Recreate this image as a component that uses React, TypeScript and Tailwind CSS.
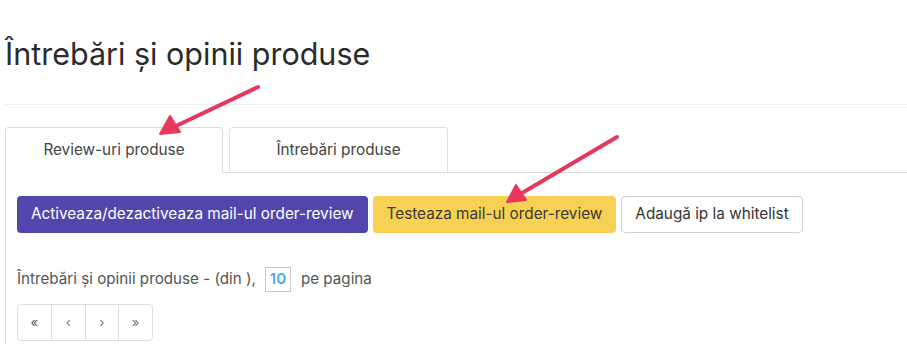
import React from 'react';

const tabs = [
  { key: 'reviews', label: 'Review-uri produse', active: true },
  { key: 'questions', label: 'Întrebări produse', active: false },
];

const pager = ['«', '‹', '›', '»'];

function Arrows() {
  return (
    <svg className="pointer-events-none absolute left-0 top-0" width="907" height="344" viewBox="0 0 907 344">
      <g stroke="#e8375c" strokeWidth="4" strokeLinecap="round" fill="#e8375c">
        <line x1="258" y1="87" x2="176" y2="126" />
        <polygon points="160,134 170,116 180,132" strokeWidth="2" strokeLinejoin="round" />
        <line x1="617" y1="137" x2="522" y2="193" />
        <polygon points="507,202 516,185 526,200" strokeWidth="2" strokeLinejoin="round" />
      </g>
    </svg>
  );
}

export default function App() {
  return (
    <div
      className="relative h-[344px] w-[907px] overflow-hidden bg-white pl-[5px] text-[#333]"
      style={{ fontFamily: 'Inter, "Noto Sans", sans-serif' }}
    >
      <h1 className="pt-[33px] text-[30.5px] leading-[42px] font-normal text-[#2b2b2b]">Întrebări și opinii produse</h1>
      <div className="mt-[29px] border-t border-[#eceef1]" />

      {/* Tabs */}
      <div className="mt-[22px] flex gap-[6px] border-b border-[#dcdcdc]">
        {tabs.map((tab) => (
          <div
            key={tab.key}
            className={
              tab.active
                ? '-mb-px flex h-[46px] w-[218px] items-center justify-center rounded-t border border-b-white border-[#dcdcdc] bg-white text-[15.3px] text-[#444]'
                : 'flex h-[45px] w-[219px] items-center justify-center rounded-t border border-b-0 border-[#e2e2e2] bg-white text-[15.3px] text-[#444]'
            }
          >
            {tab.label}
          </div>
        ))}
      </div>

      {/* Panel */}
      <div className="border-l border-[#dcdcdc] px-[11px] pt-[23px] pb-4">
        <div className="flex gap-[5px]">
          <button className="h-[37px] rounded bg-[#5246ad] px-[14px] text-[15.3px] text-white">
            Activeaza/dezactiveaza mail-ul order-review
          </button>
          <button className="h-[37px] rounded bg-[#f6d153] px-[14px] text-[15.3px] text-[#3a3a3a]">
            Testeaza mail-ul order-review
          </button>
          <button className="h-[37px] rounded border border-[#cfcfcf] bg-white px-[13px] text-[15.3px] text-[#333]">
            Adaugă ip la whitelist
          </button>
        </div>

        <div className="mt-[34px] flex items-center text-[15.2px] text-[#555]">
          <span>Întrebări și opinii produse - (din ),</span>
          <span className="ml-[9px] flex h-[25px] w-[26px] items-center justify-center border border-[#c8c8c8] text-[15px] font-semibold text-[#4aa8f0]">
            10
          </span>
          <span className="ml-[10px]">pe pagina</span>
        </div>

        <div className="mt-[12px] flex h-[37px] w-[136px] overflow-hidden rounded border border-[#dedede]">
          {pager.map((p, i) => (
            <div
              key={i}
              className={
                i === 0
                  ? 'flex flex-1 items-center justify-center text-[13px] text-[#555]'
                  : 'flex flex-1 items-center justify-center border-l border-[#dedede] text-[13px] text-[#777]'
              }
            >
              {p}
            </div>
          ))}
        </div>
      </div>

      <Arrows />
    </div>
  );
}
